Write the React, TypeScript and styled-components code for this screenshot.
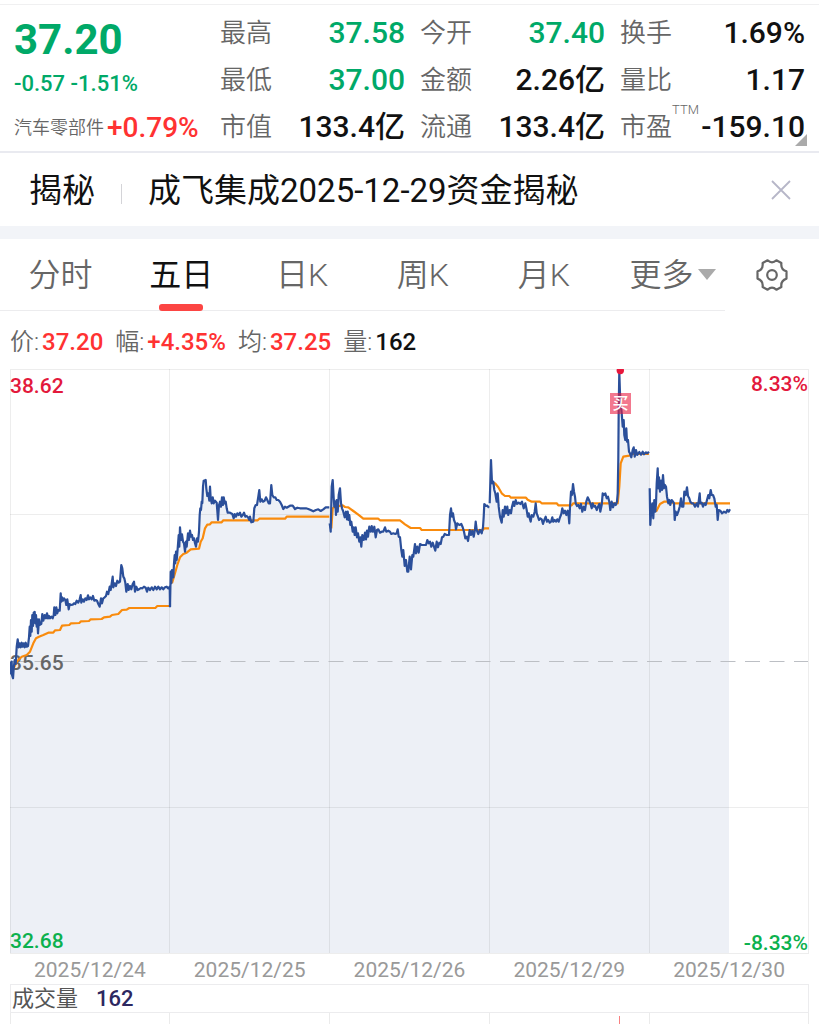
import React from "react";
import styled, { createGlobalStyle } from "styled-components";

const GlobalStyle = createGlobalStyle`
  * { box-sizing: border-box; }
  body {
    margin: 0;
    background: #fff;
    color: #111;
    font-family: Roboto, "Noto Sans CJK SC", sans-serif;
  }
  button { font: inherit; color: inherit; background: none; border: 0; padding: 0; cursor: pointer; }
  h1, h2, dl, dt, dd, p { margin: 0; font-weight: inherit; }
`;

type Tone = "up" | "down" | "plain";
const tones: Record<Tone, string> = { up: "#ff3232", down: "#00a968", plain: "#111111" };

const Page = styled.main`
  width: 100%;
  padding-top: 4px;
  overflow: hidden;
`;

const Summary = styled.header`
  position: relative;
  display: grid;
  grid-template-columns: 206fr 585fr;
  padding: 5px 14px 0;
  height: 149px;
  border-top: 1px solid #f0f0f1;
  border-bottom: 2px solid #e9eaf0;
`;

const Quote = styled.section`
  display: flex;
  flex-direction: column;
  white-space: nowrap;
`;

const LastPrice = styled.p`
  color: ${tones.down};
  font-size: 42px;
  font-weight: 700;
  line-height: 60px;
`;

const Change = styled.p`
  color: ${tones.down};
  font-size: 22px;
  font-weight: 500;
  line-height: 28px;
`;

const Sector = styled.p`
  display: flex;
  align-items: center;
  gap: 3px;
  padding-top: 8px;
  color: #666;
  font-size: 18px;
  font-weight: 350;
  line-height: 44px;
`;

const SectorChange = styled.span`
  color: ${tones.up};
  font-size: 28px;
  font-weight: 500;
`;

const Stats = styled.dl`
  display: grid;
  grid-template-columns: repeat(3, 1fr);
  grid-auto-rows: 47px;
  column-gap: 15px;
`;

const Stat = styled.div`
  display: flex;
  justify-content: space-between;
  line-height: 46px;
  white-space: nowrap;
`;

const StatLabel = styled.dt`
  color: #666;
  font-size: 26px;
  font-weight: 350;
`;

const Sup = styled.sup`
  font-size: 13px;
  line-height: 0;
  vertical-align: 22px;
`;

const StatValue = styled.dd<{ $tone: Tone }>`
  color: ${(p) => tones[p.$tone]};
  font-size: 30px;
  font-weight: 500;
`;

const Expand = styled.span`
  position: absolute;
  right: 12px;
  bottom: 5px;
  border-left: 12px solid transparent;
  border-bottom: 12px solid #aaa;
`;

const Notice = styled.section`
  display: flex;
  align-items: center;
  height: 73px;
  padding: 0 28px 0 29px;
  font-size: 33px;
  line-height: 48px;
  white-space: nowrap;
`;

const NoticeTag = styled.h2`
  font-size: 33px;
  padding: 3px 26px 0 0;
`;

const NoticeLink = styled.a`
  flex: 1;
  display: flex;
  align-items: center;
  gap: 26px;
  padding-top: 3px;
  color: inherit;
  text-decoration: none;

  &::before {
    content: "";
    width: 1px;
    height: 20px;
    margin-top: 6px;
    background: #d4d4d8;
  }
`;

const IconButton = styled.button`
  display: flex;
  align-items: center;
  justify-content: center;
`;

const Band = styled.div`
  height: 13px;
  background: #f2f4f8;
`;

const TabBar = styled.nav`
  display: grid;
  grid-template-columns: 725fr 94fr;
  height: 72px;
`;

const Tabs = styled.div`
  display: grid;
  grid-template-columns: repeat(6, 1fr);
  border-bottom: 1px solid #ececee;
`;

const Tab = styled.button<{ $active?: boolean }>`
  position: relative;
  display: flex;
  align-items: center;
  justify-content: center;
  gap: 4px;
  color: ${(p) => (p.$active ? "#111" : "#666")};
  font-size: 32px;
  font-weight: ${(p) => (p.$active ? 400 : 350)};
  line-height: 70px;
  white-space: nowrap;

  &::after {
    content: "";
    display: ${(p) => (p.$active ? "block" : "none")};
    position: absolute;
    left: 50%;
    bottom: -1px;
    width: 44px;
    height: 7px;
    margin-left: -22px;
    border-radius: 3px;
    background: #fc4543;
  }
`;

const MoreTab = styled(Tab)`
  padding-left: 16px;
`;

const Caret = styled.span`
  border: 9px solid transparent;
  border-top: 11px solid #aaa;
  border-bottom: 0;
`;

const Readout = styled.dl`
  display: flex;
  gap: 12px;
  height: 58px;
  padding: 0 10px;
  font-size: 24px;
  line-height: 62px;
  white-space: nowrap;
`;

const ReadoutItem = styled.div`
  display: flex;
  gap: 3px;
`;

const ReadoutLabel = styled.dt`
  color: #666;
  font-weight: 350;
`;

const ReadoutValue = styled.dd<{ $tone: Tone }>`
  color: ${(p) => tones[p.$tone]};
  font-weight: 500;
`;

const ChartArea = styled.section`
  padding: 0 10px;
`;

const Drawing = styled.svg`
  display: block;
  width: 100%;
  height: auto;
  font-family: Roboto, "Noto Sans CJK SC", sans-serif;
`;

const Dates = styled.div`
  display: grid;
  grid-template-columns: repeat(5, 1fr);
  height: 30px;
  color: #999;
  font-size: 21px;
  line-height: 33px;
  text-align: center;
`;

const VolumeHead = styled.div`
  display: flex;
  gap: 18px;
  height: 29px;
  padding-left: 1px;
  border: 1px solid #ececee;
  font-size: 22px;
  line-height: 27px;
`;

const VolumeLabel = styled.h2`
  font-size: 22px;
  color: #555;
`;

const VolumeValue = styled.span`
  color: #2d2860;
  font-weight: 500;
`;

const stats: { label: string; sup?: string; value: string; tone: Tone }[] = [
  { label: "最高", value: "37.58", tone: "down" },
  { label: "今开", value: "37.40", tone: "down" },
  { label: "换手", value: "1.69%", tone: "plain" },
  { label: "最低", value: "37.00", tone: "down" },
  { label: "金额", value: "2.26亿", tone: "plain" },
  { label: "量比", value: "1.17", tone: "plain" },
  { label: "市值", value: "133.4亿", tone: "plain" },
  { label: "流通", value: "133.4亿", tone: "plain" },
  { label: "市盈", sup: "TTM", value: "-159.10", tone: "plain" },
];

const readout: { label: string; value: string; tone: Tone }[] = [
  { label: "价:", value: "37.20", tone: "up" },
  { label: "幅:", value: "+4.35%", tone: "up" },
  { label: "均:", value: "37.25", tone: "up" },
  { label: "量:", value: "162", tone: "plain" },
];

const dates = ["2025/12/24", "2025/12/25", "2025/12/26", "2025/12/29", "2025/12/30"];

// Each session is sampled on a grid three times finer than the chart units.
const sessions = [
  {
    x: 0, y: 360,
    price: "30,905 32,940 35,905 36,945 39,955 41,925 44,900 47,912 50,860 53,838 56,862 59,850 62,862 65,848 68,860 71,850 74,862 77,848 80,860 84,858 87,832 89,800 91,828 93,780 95,815 97,765 99,798 101,758 104,756 106,790 108,765 110,800 112,778 114,820 117,778 119,795 122,788 124,792 127,762 130,782 134,765 138,775 141,760 144,775 147,768 150,775 154,770 158,775 161,765 163,742 166,765 169,742 172,760 175,750 179,752 182,700 184,725 186,712 189,722 192,715 196,720 199,735 202,718 206,748 209,732 213,735 218,734 222,730 226,732 230,722 235,728 239,718 242,705 244,728 248,718 252,725 256,715 260,720 264,706 267,718 271,712 275,718 279,708 283,722 287,720 291,722 295,732 299,740 303,715 306,730 310,715 314,712 318,708 321,695 325,702 329,680 332,690 335,670 338,650 340,682 344,670 348,678 352,662 356,668 360,665 364,615 367,625 370,650 373,655 376,668 379,695 383,672 386,690 390,678 394,688 398,672 402,665 405,695 409,680 413,690 417,688 422,684 427,685 432,680 437,683 441,695 445,683 450,690 455,682 460,690 465,680 470,688 475,680 480,688 485,682 490,688 495,682 500,680 504,685 509,680 510,742",
    average: "36,935 50,905 65,890 80,885 90,875 100,850 108,835 117,830 130,825 145,818 160,818 165,811 180,810 186,797 208,795 213,790 238,789 243,784 267,783 272,778 305,777 312,772 330,770 336,765 355,762 366,750 380,749 388,744 466,744 472,738 509,738",
  },
  {
    x: 160, y: 440,
    price: "30,500 32,395 34,430 36,390 40,412 42,370 44,345 46,370 48,335 50,360 53,325 56,285 58,320 60,262 63,300 66,283 69,305 72,310 75,335 78,305 80,320 84,280 87,300 90,272 93,290 96,285 99,300 102,295 105,310 108,320 111,295 114,305 117,275 119,225 121,205 123,210 125,185 127,190 129,140 131,122 137,120 139,145 142,168 145,160 148,182 150,140 152,175 155,190 158,172 161,190 165,182 170,188 174,240 177,195 180,185 183,200 186,172 189,195 191,172 194,190 197,185 200,205 203,218 210,218 217,222 221,235 224,222 228,230 232,220 236,225 240,218 244,230 248,225 252,218 256,230 260,228 264,232 268,240 270,230 274,247 280,245 283,205 287,195 291,195 295,170 298,150 301,185 305,178 309,185 314,182 318,172 322,180 326,190 330,190 334,135 337,165 341,172 346,172 350,180 355,180 360,185 365,195 370,207 375,200 380,203 390,197 398,197 405,207 412,203 420,205 430,205 438,205 445,207 452,210 460,214 468,210 475,208 482,213 490,208 497,202 508,202",
    average: "36,430 45,400 52,375 60,352 70,342 80,338 92,328 117,326 122,305 128,295 135,265 142,254 150,253 155,247 185,247 190,241 293,241 298,236 375,236 380,230 508,230",
  },
  {
    x: 320, y: 440,
    price: "29,250 32,275 35,140 38,120 41,175 43,200 46,185 48,225 50,180 53,215 56,165 60,145 63,190 66,205 70,215 74,232 78,215 81,238 83,215 86,240 88,225 91,255 94,245 98,275 101,262 104,285 107,262 111,292 114,280 118,305 121,292 124,320 127,285 131,300 135,278 138,298 141,272 144,290 148,260 152,275 155,258 159,275 163,260 167,292 171,270 175,268 180,278 185,275 190,275 195,262 199,275 205,272 210,275 214,282 220,280 226,282 230,280 233,268 236,290 240,292 244,330 247,350 250,330 254,378 258,360 262,395 265,395 269,350 273,388 277,345 280,350 285,312 288,340 292,320 296,338 300,312 305,315 312,315 318,315 322,300 326,310 330,305 334,320 338,308 342,320 346,332 350,305 354,322 358,308 362,312 366,292 370,290 374,282 380,285 387,285 390,225 393,205 396,230 399,220 402,240 406,250 408,268 412,250 418,255 424,252 428,262 432,275 436,295 440,290 444,303 449,270 453,285 457,272 461,290 465,268 467,245 470,270 475,282 480,270 485,280 489,262 491,230 493,192 497,198 502,197 507,203",
    average: "34,265 38,205 45,200 68,196 75,201 85,202 100,213 115,224 130,236 175,236 180,241 240,241 255,253 272,264 300,264 305,270 488,270 493,265 507,265",
  },
  {
    x: 480, y: 360,
    price: "29,430 33,300 36,370 40,365 43,390 46,400 50,425 53,400 56,440 60,470 65,488 68,450 71,470 75,440 78,460 82,440 85,465 89,450 93,460 96,440 100,425 103,438 107,420 111,432 116,428 121,432 126,425 131,445 136,430 140,450 143,470 146,460 149,475 152,485 155,465 160,470 164,455 167,430 170,460 173,468 177,480 181,475 185,478 189,492 193,480 197,470 201,485 205,480 209,488 213,485 217,472 220,485 224,480 228,485 232,478 236,485 240,472 244,462 247,445 251,460 255,452 259,465 263,452 266,470 268,490 270,440 273,395 276,405 279,372 282,395 285,410 287,430 291,438 295,435 299,445 303,432 307,455 311,440 315,450 319,425 323,412 327,420 331,430 335,445 338,430 342,440 346,438 350,450 354,440 358,432 361,455 365,435 368,400 372,405 376,400 380,415 384,410 388,425 391,450 395,425 399,442 403,430 407,435 411,425 413,400 415,300 416,150 418,35 420,100 422,130 425,160 428,200 431,180 433,225 436,240 439,205 441,245 444,240 447,275 450,280 454,292 458,270 461,262 464,290 468,270 472,285 478,276 483,284 488,275 492,283 498,277 502,280 507,275",
    average: "36,368 45,370 55,382 65,400 75,408 88,408 93,413 138,413 143,419 155,425 180,425 185,430 230,430 235,436 275,436 280,430 413,430 418,380 422,310 430,290 448,287 455,282 507,282",
  },
  {
    x: 640, y: 360,
    price: "29,385 31,495 34,450 37,430 40,475 43,420 46,455 48,430 50,370 53,325 55,385 57,352 60,395 63,362 66,390 69,345 72,385 75,375 78,380 81,410 85,430 88,420 91,435 95,420 99,425 102,430 104,480 107,455 111,465 115,455 119,440 123,415 126,440 130,440 133,395 137,405 141,382 144,408 148,415 151,425 155,430 160,430 165,440 170,430 174,440 179,400 181,430 185,428 189,440 193,430 197,435 201,420 205,405 208,415 212,390 215,405 219,405 223,415 227,440 230,435 233,480 236,450 241,452 246,460 252,455 258,458 262,450 266,455 270,448",
    average: "48,455 60,432 72,425 95,425 100,430 270,430",
  },
];

const toPoints = (raw: string, dx: number, dy: number) =>
  raw.split(" ").map((pair) => {
    const [x, y] = pair.split(",").map(Number);
    return [dx + x / 3, dy + y / 3];
  });

const toPath = (pts: number[][]) => "M" + pts.map(([x, y]) => `${x.toFixed(1)} ${y.toFixed(1)}`).join("L");

const curves = sessions.map((s) => ({
  price: toPoints(s.price, s.x, s.y),
  average: toPoints(s.average, s.x, s.y),
}));

const areaPath = (() => {
  const all = curves.flatMap((c) => c.price);
  return `${toPath(all)}L729 500V953L10 953Z`;
})();

function PriceChart() {
  return (
    <Drawing viewBox="10 369 799 585" role="img" aria-label="五日走势图">
      <path d={areaPath} fill="#edf0f6" />
      <g fill="none" stroke="#000" strokeOpacity="0.07">
        <rect x="10.5" y="369.5" width="798" height="584" />
        <path d="M169.5 369V953M329.5 369V953M489.5 369V953M649.5 369V953M10 514.5H808M10 807.5H808" />
      </g>
      <path d="M10 661.5H808" stroke="#bcbfc4" strokeDasharray="15 9.5" />
      <g fontSize="21" fontWeight="500">
        <text x="10" y="393" fill="#e3193c">38.62</text>
        <text x="10" y="670" fill="#666">35.65</text>
        <text x="10" y="948" fill="#0cb14e">32.68</text>
        <text x="808" y="391" fill="#e3193c" textAnchor="end">8.33%</text>
        <text x="808" y="950" fill="#0cb14e" textAnchor="end">-8.33%</text>
      </g>
      <g fill="none" strokeWidth="2.2" strokeLinejoin="round">
        {curves.map((c, i) => (
          <path key={i} d={toPath(c.average)} stroke="#f98b0d" />
        ))}
        {curves.map((c, i) => (
          <path key={i} d={toPath(c.price)} stroke="#2b4f9a" />
        ))}
      </g>
      <circle cx="620.3" cy="370.5" r="3.7" fill="#e8173c" />
      <rect x="610" y="393" width="21" height="21" fill="#e8173c" fillOpacity="0.58" />
      <text x="620.5" y="409" fontSize="16" fontWeight="500" fill="#fff" textAnchor="middle">买</text>
    </Drawing>
  );
}

function CloseIcon() {
  return (
    <svg width="20" height="20" viewBox="0 0 20 20" fill="none" stroke="#b6b6c8" strokeWidth="1.8">
      <path d="M1 1L19 19M19 1L1 19" />
    </svg>
  );
}

function GearIcon() {
  return (
    <svg width="34" height="34" viewBox="0 0 34 34" fill="none" stroke="#666" strokeWidth="2.2" strokeLinejoin="round">
      <path d="M12.600 2.300Q17 6.500 21.400 2.300L26.400 5Q25.500 11.500 31.500 13.400V20.600Q25.500 22.500 26.400 29L21.400 31.700Q17 27.500 12.600 31.700L7.600 29Q8.500 22.500 2.500 20.600V13.400Q8.500 11.500 7.600 5Z" />
      <circle cx="17" cy="17" r="4.800" />
    </svg>
  );
}

export default function App() {
  return (
    <>
      <GlobalStyle />
      <Page>
        <Summary>
          <Quote>
            <LastPrice>37.20</LastPrice>
            <Change>-0.57 -1.51%</Change>
            <Sector>
              汽车零部件<SectorChange>+0.79%</SectorChange>
            </Sector>
          </Quote>
          <Stats>
            {stats.map((s) => (
              <Stat key={s.label}>
                <StatLabel>
                  {s.label}
                  {s.sup && <Sup>{s.sup}</Sup>}
                </StatLabel>
                <StatValue $tone={s.tone}>{s.value}</StatValue>
              </Stat>
            ))}
          </Stats>
          <Expand />
        </Summary>
        <Notice>
          <NoticeTag>揭秘</NoticeTag>
          <NoticeLink href="#notice">成飞集成2025-12-29资金揭秘</NoticeLink>
          <IconButton type="button" aria-label="关闭">
            <CloseIcon />
          </IconButton>
        </Notice>
        <Band />
        <TabBar>
          <Tabs>
            <Tab type="button">分时</Tab>
            <Tab type="button" $active>五日</Tab>
            <Tab type="button">日K</Tab>
            <Tab type="button">周K</Tab>
            <Tab type="button">月K</Tab>
            <MoreTab type="button">
              更多
              <Caret />
            </MoreTab>
          </Tabs>
          <IconButton type="button" aria-label="设置">
            <GearIcon />
          </IconButton>
        </TabBar>
        <Readout>
          {readout.map((r) => (
            <ReadoutItem key={r.label}>
              <ReadoutLabel>{r.label}</ReadoutLabel>
              <ReadoutValue $tone={r.tone}>{r.value}</ReadoutValue>
            </ReadoutItem>
          ))}
        </Readout>
        <ChartArea>
          <PriceChart />
          <Dates>
            {dates.map((d) => (
              <span key={d}>{d}</span>
            ))}
          </Dates>
          <VolumeHead>
            <VolumeLabel>成交量</VolumeLabel>
            <VolumeValue>162</VolumeValue>
          </VolumeHead>
          <Drawing viewBox="10 1013 799 11" role="img" aria-label="成交量图">
            <path d="M10.500 1013V1024M169.500 1013V1024M329.500 1013V1024M489.500 1013V1024M649.500 1013V1024M808.500 1013V1024" stroke="#ebebeb" />
            <path d="M619.500 1016V1024" stroke="#f98080" />
          </Drawing>
        </ChartArea>
      </Page>
    </>
  );
}
